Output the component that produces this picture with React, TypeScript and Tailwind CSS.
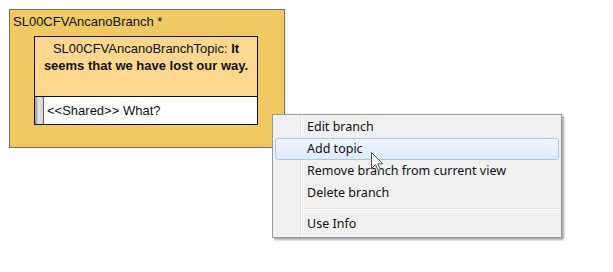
import React from "react";

const arial = { fontFamily: '"Liberation Sans", Arial, sans-serif' };
const ui = { fontFamily: '"Noto Sans", "Noto Sans CJK JP", sans-serif' };

function MenuItem({ label, active }: { label: string; active?: boolean }) {
  return (
    <div className="relative h-[22px] flex items-center">
      {active && (
        <div className="absolute left-[2px] right-[2px] top-0 bottom-0 rounded-[3px] border border-[#a9c8ee] bg-gradient-to-b from-[#f0f5fc] to-[#dfeafa]" />
      )}
      <span className="relative pl-[34px] text-[12.5px] text-[#111] leading-none" style={ui}>
        {label}
      </span>
    </div>
  );
}

export default function App() {
  return (
    <div className="relative w-[613px] h-[272px] bg-white overflow-hidden">
      <div className="pt-[9px] pl-[9px]">
        <div className="w-[276px] h-[139px] border border-[#75705c] bg-[#f0c962] flex flex-col">
          <div className="pl-[3px] pt-[4px] text-[13px] leading-[16px] text-[#111]" style={arial}>
            SL00CFVAncanoBranch *
          </div>
          <div className="ml-[24px] mt-[6px] w-[224px] h-[89px] border border-[#111] bg-[#fdd78d] flex flex-col">
            <div className="flex-1 text-center text-[13px] leading-[17px] text-[#111] pt-[3px]" style={arial}>
              SL00CFVAncanoBranchTopic: <b>It</b>
              <br />
              <b>seems that we have lost our way.</b>
            </div>
            <div className="h-[28px] border-t border-[#111] flex">
              <div className="w-[9px] bg-gradient-to-r from-[#9a9a9a] via-[#e4e4e4] to-[#cfcfcf] border-r border-[#666]" />
              <div className="flex-1 bg-white flex items-center pl-[3px] text-[13px] text-[#111]" style={arial}>
                &lt;&lt;Shared&gt;&gt; What?
              </div>
            </div>
          </div>
        </div>
      </div>

      {/* context menu */}
      <div className="absolute left-[272px] top-[114px] w-[290px] h-[124px] border border-[#979797] bg-[#f0f0f0] shadow-[2px_2px_2px_rgba(0,0,0,0.35)] py-[1px]">
        <div className="absolute left-[27px] top-0 bottom-0 w-[1px] bg-[#e2e3e3]" />
        <div className="absolute left-[28px] top-0 bottom-0 w-[1px] bg-white" />
        <MenuItem label="Edit branch" />
        <MenuItem label="Add topic" active />
        <MenuItem label="Remove branch from current view" />
        <MenuItem label="Delete branch" />
        <div className="h-[9px] flex flex-col justify-center pl-[30px] pr-[2px]">
          <div className="h-[1px] bg-[#e0e0e0]" />
          <div className="h-[1px] bg-white" />
        </div>
        <MenuItem label="Use Info" />
      </div>

      {/* cursor */}
      <svg className="absolute left-[371px] top-[152px]" width="13" height="20" viewBox="0 0 13 20">
        <path
          d="M0.5 0.5 L0.5 16.5 L4.5 12.5 L7.2 18.5 L9.3 17.6 L6.8 11.8 L11.8 11.8 Z"
          fill="#ffffff"
          stroke="#555"
          strokeWidth="1"
          strokeLinejoin="round"
        />
      </svg>
    </div>
  );
}
